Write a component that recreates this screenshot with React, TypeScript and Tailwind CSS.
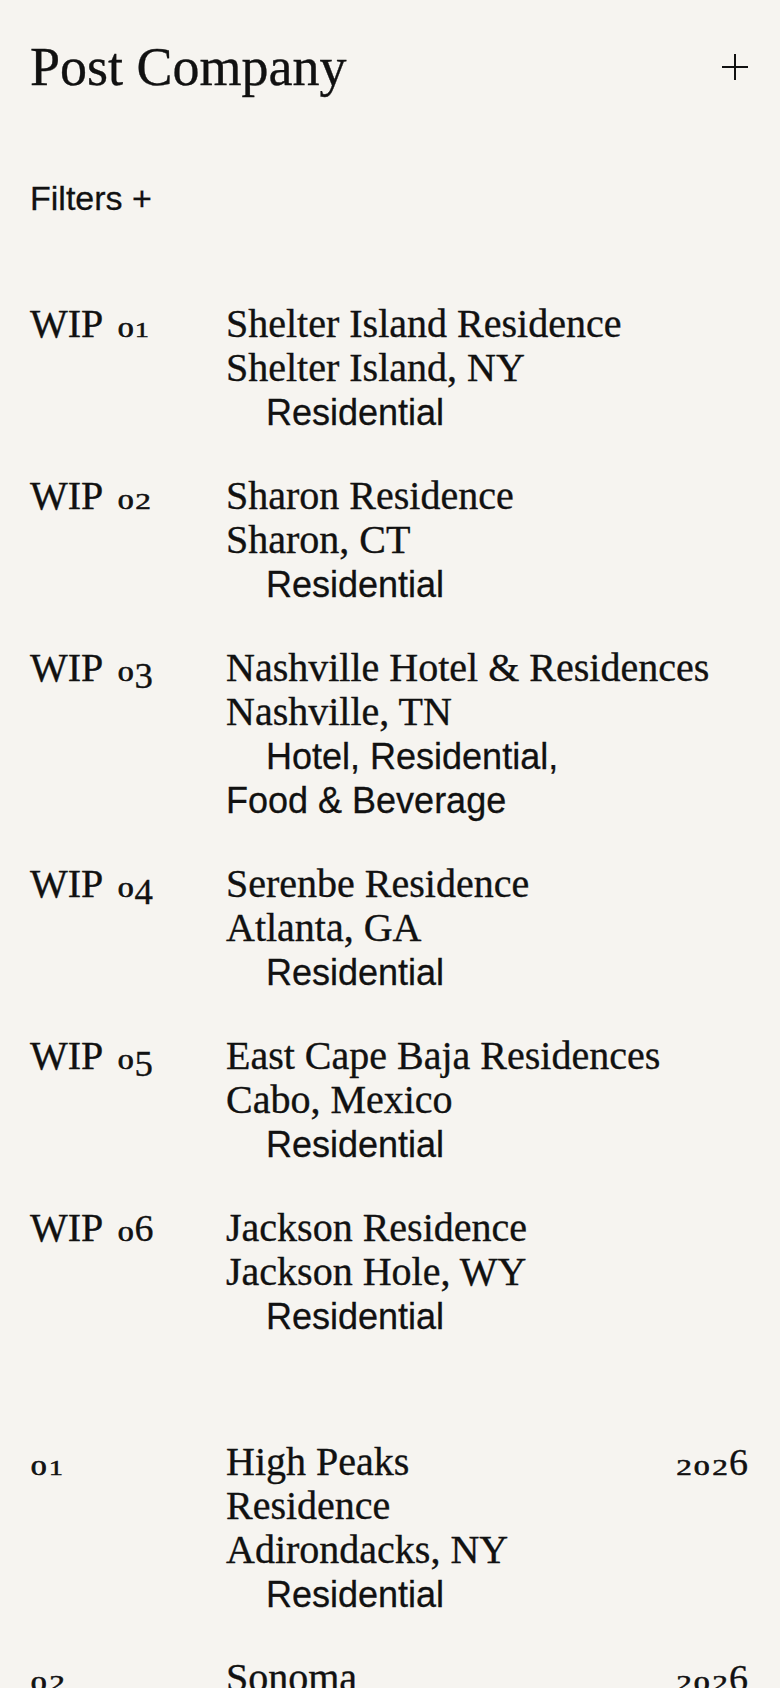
import React from "react";

const serif = "font-['Liberation_Serif','Times_New_Roman',serif] [-webkit-text-stroke:0.35px_#111111]";
const sans = "font-['Liberation_Sans',Arial,sans-serif] [-webkit-text-stroke:0.3px_#111111]";

function OldStyle({ text }: { text: string }) {
  return (
    <>
      {text.split("").map((ch, i) => {
        if (ch === "0") {
          return (
            <span key={i} className="inline-block w-[0.8em] text-center text-[0.55em] scale-x-[1.45] [-webkit-text-stroke:0.6px_#111111]">
              {ch}
            </span>
          );
        }
        if (ch === "2") {
          return (
            <span key={i} className="inline-block w-[0.78em] text-center text-[0.58em] scale-x-[1.35] [-webkit-text-stroke:0.5px_#111111]">
              {ch}
            </span>
          );
        }
        if (ch === "1") {
          return (
            <span key={i} className="inline-block w-[0.72em] text-center text-[0.55em] scale-x-[1.3] [-webkit-text-stroke:0.5px_#111111]">
              {ch}
            </span>
          );
        }
        if (ch === "3" || ch === "4" || ch === "5" || ch === "7" || ch === "9") {
          return (
            <span key={i} className="inline-block translate-y-[0.2em] text-[0.92em] leading-none">
              {ch}
            </span>
          );
        }
        return (
          <span key={i} className="text-[0.95em]">
            {ch}
          </span>
        );
      })}
    </>
  );
}

type Wip = { n: string; title: string; place: string; cat: string };
type Proj = { n: string; title: string; place: string; cat: string; year: string };

const wips: Wip[] = [
  { n: "01", title: "Shelter Island Residence", place: "Shelter Island, NY", cat: "Residential" },
  { n: "02", title: "Sharon Residence", place: "Sharon, CT", cat: "Residential" },
  { n: "03", title: "Nashville Hotel & Residences", place: "Nashville, TN", cat: "Hotel, Residential, Food & Beverage" },
  { n: "04", title: "Serenbe Residence", place: "Atlanta, GA", cat: "Residential" },
  { n: "05", title: "East Cape Baja Residences", place: "Cabo, Mexico", cat: "Residential" },
  { n: "06", title: "Jackson Residence", place: "Jackson Hole, WY", cat: "Residential" },
];

const projects: Proj[] = [
  { n: "01", title: "High Peaks Residence", place: "Adirondacks, NY", cat: "Residential", year: "2026" },
  { n: "02", title: "Sonoma Residence", place: "Sonoma, CA", cat: "Residential", year: "2026" },
  { n: "03", title: "Montauk Residence", place: "Montauk, NY", cat: "Residential", year: "2025" },
];

function Category({ text, narrow }: { text: string; narrow?: boolean }) {
  return (
    <p
      className={`${sans} text-[36px] leading-[44px] pt-[1px] indent-[40px] ${
        narrow ? "max-w-[296px]" : "max-w-[360px]"
      }`}
    >
      {text}
    </p>
  );
}

export default function App() {
  return (
    <div className="min-h-screen bg-[#f6f4f0] text-[#111111] pl-[30px] pr-[32px] pb-[120px]">
      <header className="flex items-center justify-between pt-[37px]">
        <h1 className={`${serif} text-[54px] leading-[60px] font-normal`}>Post Company</h1>
        <svg width="28" height="28" viewBox="0 0 28 28" className="mr-[-1px]" aria-label="Open menu">
          <line x1="14" y1="1" x2="14" y2="27" stroke="#111" strokeWidth="2" />
          <line x1="1" y1="14" x2="27" y2="14" stroke="#111" strokeWidth="2" />
        </svg>
      </header>

      <div className={`${sans} text-[34px] leading-[40px] mt-[81px]`}>Filters +</div>

      <section className="mt-[84px] flex flex-col gap-[39px]">
        {wips.map((w) => (
          <div key={w.n} className="flex">
            <div className={`${serif} text-[40px] leading-[44px] w-[196px] shrink-0`}>
              WIP{" "}
              <span className="ml-[5px]">
                <OldStyle text={w.n} />
              </span>
            </div>
            <div className="flex-1 min-w-0">
              <p className={`${serif} text-[40px] leading-[44px]`}>{w.title}</p>
              <p className={`${serif} text-[40px] leading-[44px]`}>{w.place}</p>
              <Category text={w.cat} />
            </div>
          </div>
        ))}
      </section>

      <section className="mt-[101px] flex flex-col gap-[39px]">
        {projects.map((p) => (
          <div key={p.n} className="flex">
            <div className={`${serif} text-[40px] leading-[44px] w-[196px] shrink-0`}>
              <OldStyle text={p.n} />
            </div>
            <div className="w-[296px] shrink-0">
              <p className={`${serif} text-[40px] leading-[44px]`}>{p.title}</p>
              <p className={`${serif} text-[40px] leading-[44px]`}>{p.place}</p>
              <Category text={p.cat} narrow />
            </div>
            <div className={`${serif} text-[40px] leading-[44px] flex-1 text-right`}>
              <OldStyle text={p.year} />
            </div>
          </div>
        ))}
      </section>
    </div>
  );
}
